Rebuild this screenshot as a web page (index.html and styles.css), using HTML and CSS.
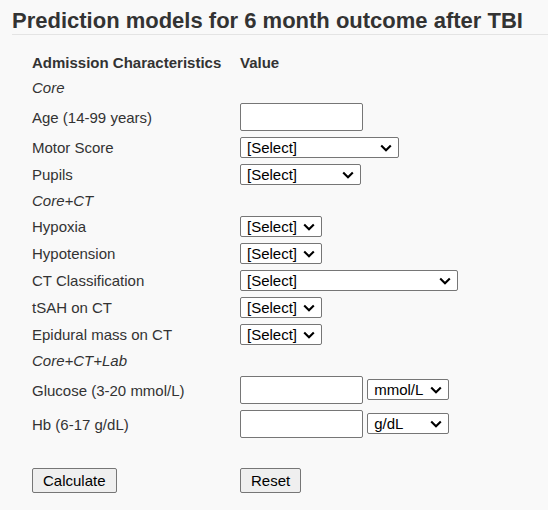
FILE: index.html
```html
<!DOCTYPE html>
<html lang="en">
<head>
  <meta charset="UTF-8">
  <meta name="viewport" content="width=device-width, initial-scale=1.0">
  <title>Prediction models for 6 month outcome after TBI</title>
  <link rel="stylesheet" href="styles.css">
</head>
<body>
  <h1>Prediction models for 6 month outcome after TBI</h1>
  <form id="tbi-form">
    <table class="calc">
      <tr class="head">
        <th class="label-col">Admission Characteristics</th>
        <th>Value</th>
      </tr>
      <tr class="section">
        <td colspan="2">Core</td>
      </tr>
      <tr>
        <td>Age (14-99 years)</td>
        <td><input type="text" id="age" name="age" class="num"></td>
      </tr>
      <tr>
        <td>Motor Score</td>
        <td>
          <select id="motor" name="motor" class="sel-motor">
            <option>[Select]</option>
            <option>None / Extension</option>
            <option>Abnormal flexion</option>
            <option>Normal flexion</option>
            <option>Localizes / Obeys</option>
            <option>Untestable / Missing</option>
          </select>
        </td>
      </tr>
      <tr>
        <td>Pupils</td>
        <td>
          <select id="pupils" name="pupils" class="sel-pupils">
            <option>[Select]</option>
            <option>Both reacting</option>
            <option>One reacting</option>
            <option>None reacting</option>
          </select>
        </td>
      </tr>
      <tr class="section">
        <td colspan="2">Core+CT</td>
      </tr>
      <tr>
        <td>Hypoxia</td>
        <td>
          <select id="hypoxia" name="hypoxia" class="sel-yn">
            <option>[Select]</option>
            <option>No</option>
            <option>Yes</option>
          </select>
        </td>
      </tr>
      <tr>
        <td>Hypotension</td>
        <td>
          <select id="hypotension" name="hypotension" class="sel-yn">
            <option>[Select]</option>
            <option>No</option>
            <option>Yes</option>
          </select>
        </td>
      </tr>
      <tr>
        <td>CT Classification</td>
        <td>
          <select id="ct" name="ct" class="sel-ct">
            <option>[Select]</option>
            <option>I</option>
            <option>II</option>
            <option>III / IV</option>
            <option>V / VI</option>
          </select>
        </td>
      </tr>
      <tr>
        <td>tSAH on CT</td>
        <td>
          <select id="tsah" name="tsah" class="sel-yn">
            <option>[Select]</option>
            <option>No</option>
            <option>Yes</option>
          </select>
        </td>
      </tr>
      <tr>
        <td>Epidural mass on CT</td>
        <td>
          <select id="edh" name="edh" class="sel-yn">
            <option>[Select]</option>
            <option>No</option>
            <option>Yes</option>
          </select>
        </td>
      </tr>
      <tr class="section">
        <td colspan="2">Core+CT+Lab</td>
      </tr>
      <tr>
        <td>Glucose (3-20 mmol/L)</td>
        <td>
          <input type="text" id="glucose" name="glucose" class="num">
          <select id="glucose-unit" name="glucose_unit" class="sel-unit">
            <option>mmol/L</option>
            <option>mg/dL</option>
          </select>
        </td>
      </tr>
      <tr>
        <td>Hb (6-17 g/dL)</td>
        <td>
          <input type="text" id="hb" name="hb" class="num">
          <select id="hb-unit" name="hb_unit" class="sel-unit">
            <option>g/dL</option>
            <option>mmol/L</option>
          </select>
        </td>
      </tr>
      <tr class="spacer">
        <td colspan="2"></td>
      </tr>
      <tr>
        <td><button type="button" id="calc-btn">Calculate</button></td>
        <td><button type="reset">Reset</button></td>
      </tr>
    </table>
  </form>
</body>
</html>
```

FILE: styles.css
```css
body {
  margin: 0;
  background: #f9f9f9;
  font-family: Arial, "Liberation Sans", sans-serif;
  font-size: 15px;
  color: #333;
}
h1 {
  margin: 8px 0 0 12px;
  padding: 0;
  font-size: 22px;
  line-height: 26px;
  font-weight: bold;
  color: #333;
  border-bottom: 1px solid #e4e4e4;
}
form {
  margin: 15px 0 0 32px;
}
.calc {
  border-collapse: collapse;
}
.calc th,
.calc td {
  padding: 3px 0;
  line-height: 19px;
  text-align: left;
  vertical-align: middle;
}
.calc .label-col {
  width: 208px;
}
.calc .head th {
  font-weight: bold;
}
.section td {
  font-style: italic;
}
.spacer td {
  height: 18px;
}
input.num {
  box-sizing: border-box;
  width: 123px;
  height: 28px;
  margin: 0;
  border: 1px solid #767676;
  border-radius: 2px;
  background: white;
  font: 15px Arial, "Liberation Sans", sans-serif;
  vertical-align: top;
}
select {
  -webkit-appearance: none;
  appearance: none;
  box-sizing: border-box;
  height: 21px;
  margin: 0;
  padding: 0 20px 0 6px;
  border: 1px solid #767676;
  border-radius: 2px;
  background: white url("data:image/svg+xml,%3Csvg xmlns='http://www.w3.org/2000/svg' width='12' height='8' viewBox='0 0 12 8'%3E%3Cpath d='M1.2 1.4 6 6.2 10.8 1.4' fill='none' stroke='%23000' stroke-width='2.1'/%3E%3C/svg%3E") no-repeat right 6px center;
  background-size: 12px 8px;
  font: 15px/19px Arial, "Liberation Sans", sans-serif;
  color: #000;
  vertical-align: top;
}
.sel-motor { width: 159px; }
.sel-pupils { width: 121px; }
.sel-yn { width: 82px; }
.sel-ct { width: 218px; }
.sel-unit {
  width: 82px;
  margin-top: 3px;
}
button {
  font: 15px Arial, "Liberation Sans", sans-serif;
  padding: 3px 10px;
  margin: 0;
  color: #000;
  background-color: #efefef;
  border: 1px solid #767676;
  border-radius: 2px;
  cursor: pointer;
  vertical-align: top;
}
```
